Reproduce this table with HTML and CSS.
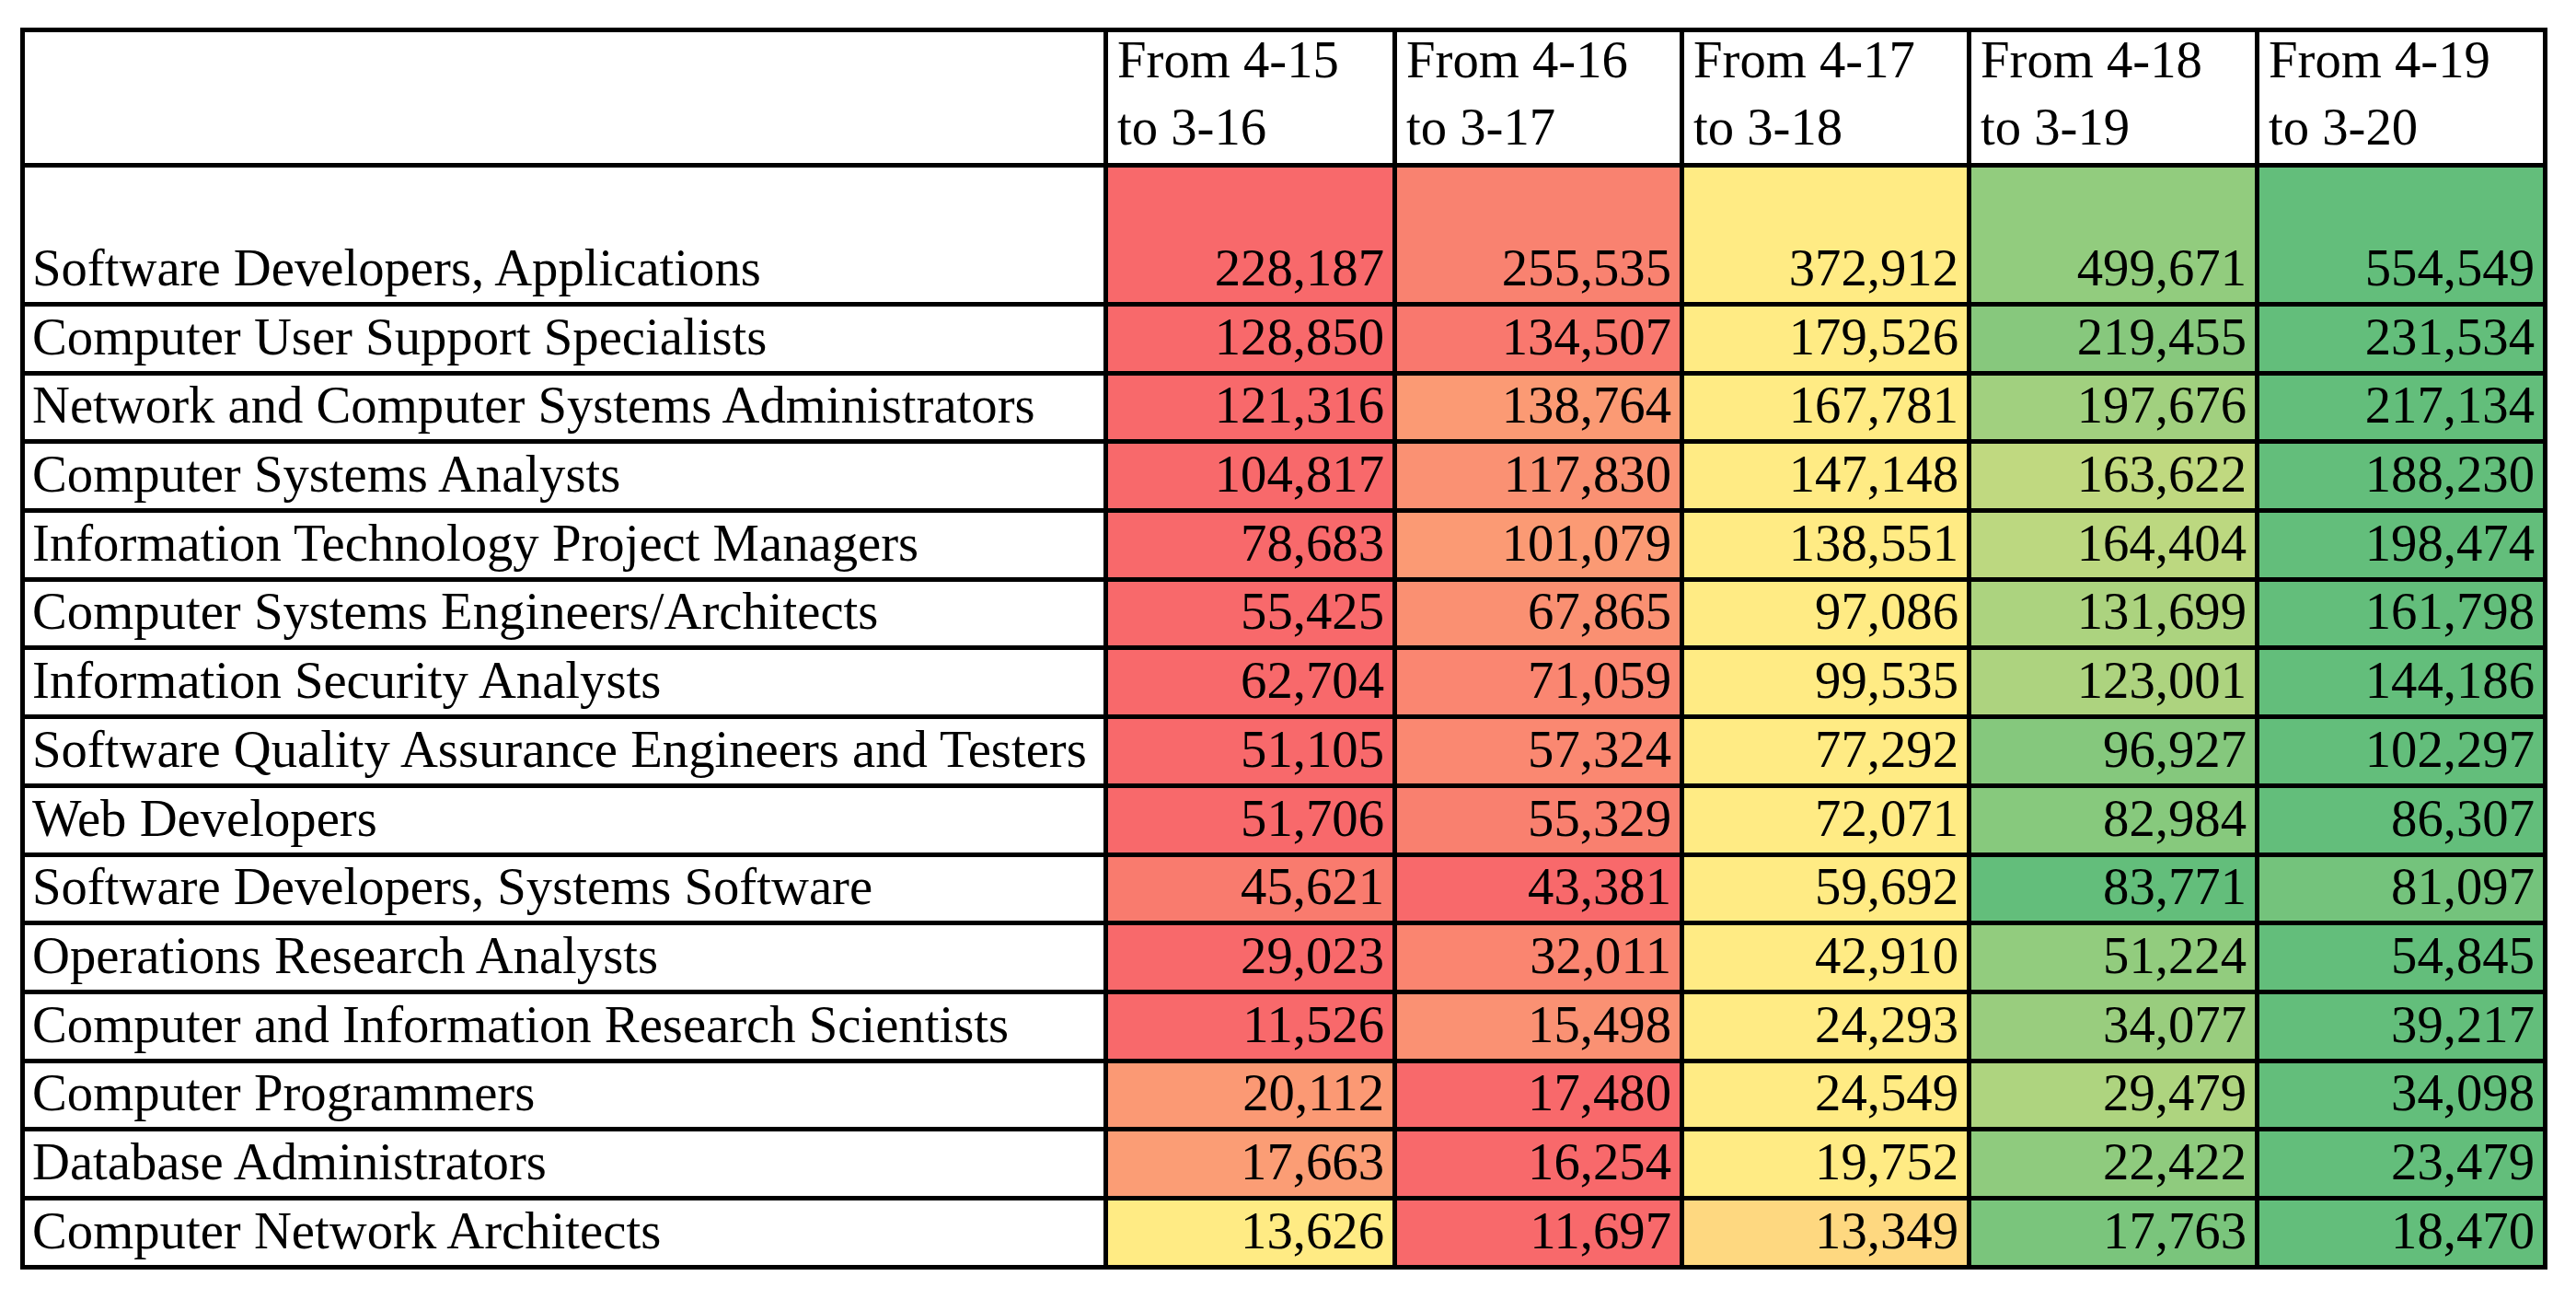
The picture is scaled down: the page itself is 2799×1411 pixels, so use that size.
FILE: index.html
```html
<!DOCTYPE html>
<html lang="en">
<head>
<meta charset="utf-8">
<title>IT occupations</title>
<link rel="stylesheet" href="styles.css">
</head>
<body>
<div class="sheet" role="table">
  <div class="row head-row" role="row">
    <div class="cell head corner" role="columnheader"></div>
    <div class="cell head" role="columnheader"><span>From 4-15<br>to 3-16</span></div>
    <div class="cell head" role="columnheader"><span>From 4-16<br>to 3-17</span></div>
    <div class="cell head" role="columnheader"><span>From 4-17<br>to 3-18</span></div>
    <div class="cell head" role="columnheader"><span>From 4-18<br>to 3-19</span></div>
    <div class="cell head" role="columnheader"><span>From 4-19<br>to 3-20</span></div>
  </div>
  <div class="row data-row" role="row">
    <div class="cell label" role="rowheader">Software Developers, Applications</div>
    <div class="cell num">228,187</div><div class="cell num">255,535</div><div class="cell num">372,912</div><div class="cell num">499,671</div><div class="cell num">554,549</div>
  </div>
  <div class="row data-row" role="row">
    <div class="cell label" role="rowheader">Computer User Support Specialists</div>
    <div class="cell num">128,850</div><div class="cell num">134,507</div><div class="cell num">179,526</div><div class="cell num">219,455</div><div class="cell num">231,534</div>
  </div>
  <div class="row data-row" role="row">
    <div class="cell label" role="rowheader">Network and Computer Systems Administrators</div>
    <div class="cell num">121,316</div><div class="cell num">138,764</div><div class="cell num">167,781</div><div class="cell num">197,676</div><div class="cell num">217,134</div>
  </div>
  <div class="row data-row" role="row">
    <div class="cell label" role="rowheader">Computer Systems Analysts</div>
    <div class="cell num">104,817</div><div class="cell num">117,830</div><div class="cell num">147,148</div><div class="cell num">163,622</div><div class="cell num">188,230</div>
  </div>
  <div class="row data-row" role="row">
    <div class="cell label" role="rowheader">Information Technology Project Managers</div>
    <div class="cell num">78,683</div><div class="cell num">101,079</div><div class="cell num">138,551</div><div class="cell num">164,404</div><div class="cell num">198,474</div>
  </div>
  <div class="row data-row" role="row">
    <div class="cell label" role="rowheader">Computer Systems Engineers/Architects</div>
    <div class="cell num">55,425</div><div class="cell num">67,865</div><div class="cell num">97,086</div><div class="cell num">131,699</div><div class="cell num">161,798</div>
  </div>
  <div class="row data-row" role="row">
    <div class="cell label" role="rowheader">Information Security Analysts</div>
    <div class="cell num">62,704</div><div class="cell num">71,059</div><div class="cell num">99,535</div><div class="cell num">123,001</div><div class="cell num">144,186</div>
  </div>
  <div class="row data-row" role="row">
    <div class="cell label" role="rowheader">Software Quality Assurance Engineers and Testers</div>
    <div class="cell num">51,105</div><div class="cell num">57,324</div><div class="cell num">77,292</div><div class="cell num">96,927</div><div class="cell num">102,297</div>
  </div>
  <div class="row data-row" role="row">
    <div class="cell label" role="rowheader">Web Developers</div>
    <div class="cell num">51,706</div><div class="cell num">55,329</div><div class="cell num">72,071</div><div class="cell num">82,984</div><div class="cell num">86,307</div>
  </div>
  <div class="row data-row" role="row">
    <div class="cell label" role="rowheader">Software Developers, Systems Software</div>
    <div class="cell num">45,621</div><div class="cell num">43,381</div><div class="cell num">59,692</div><div class="cell num">83,771</div><div class="cell num">81,097</div>
  </div>
  <div class="row data-row" role="row">
    <div class="cell label" role="rowheader">Operations Research Analysts</div>
    <div class="cell num">29,023</div><div class="cell num">32,011</div><div class="cell num">42,910</div><div class="cell num">51,224</div><div class="cell num">54,845</div>
  </div>
  <div class="row data-row" role="row">
    <div class="cell label" role="rowheader">Computer and Information Research Scientists</div>
    <div class="cell num">11,526</div><div class="cell num">15,498</div><div class="cell num">24,293</div><div class="cell num">34,077</div><div class="cell num">39,217</div>
  </div>
  <div class="row data-row" role="row">
    <div class="cell label" role="rowheader">Computer Programmers</div>
    <div class="cell num">20,112</div><div class="cell num">17,480</div><div class="cell num">24,549</div><div class="cell num">29,479</div><div class="cell num">34,098</div>
  </div>
  <div class="row data-row" role="row">
    <div class="cell label" role="rowheader">Database Administrators</div>
    <div class="cell num">17,663</div><div class="cell num">16,254</div><div class="cell num">19,752</div><div class="cell num">22,422</div><div class="cell num">23,479</div>
  </div>
  <div class="row data-row" role="row">
    <div class="cell label" role="rowheader">Computer Network Architects</div>
    <div class="cell num">13,626</div><div class="cell num">11,697</div><div class="cell num">13,349</div><div class="cell num">17,763</div><div class="cell num">18,470</div>
  </div>
</div>
<script src="script.js"></script>
</body>
</html>
```

FILE: styles.css
```css
html, body {
  margin: 0;
  padding: 0;
  background: #ffffff;
}

body {
  padding: 30px 0 0 22px;
  font-family: "Liberation Serif", "Times New Roman", serif;
  font-size: 56.7px;
  color: #000000;
}

.sheet {
  display: inline-grid;
  grid-template-columns: 1172px 309px 307px 307px 308px 308px;
  grid-template-rows: 142px 146px repeat(14, 69.7px);
  gap: 5px;
  padding: 5px;
  background: #000000;
}

.row {
  display: contents;
}

.cell {
  display: flex;
  align-items: flex-end;
  background: #ffffff;
  white-space: nowrap;
  line-height: 62px;
  padding-bottom: 6px;
  min-width: 0;
}

.head {
  line-height: 73px;
  padding: 0 0 3px 10px;
}

.label {
  padding-left: 8px;
}

.num {
  justify-content: flex-end;
  padding-right: 9px;
}
```

FILE: script.js
```js
(function () {
  var RED = [248, 105, 107];
  var YEL = [255, 235, 132];
  var GRN = [99, 190, 123];

  function mix(a, b, t) {
    return a.map(function (v, i) { return Math.round(v + (b[i] - v) * t); });
  }

  var rows = document.querySelectorAll('.data-row');
  rows.forEach(function (row) {
    var cells = Array.prototype.slice.call(row.querySelectorAll('.num'));
    var vals = cells.map(function (c) { return Number(c.textContent.replace(/,/g, '')); });
    var sorted = vals.slice().sort(function (a, b) { return a - b; });
    var min = sorted[0];
    var mid = sorted[Math.floor(sorted.length / 2)];
    var max = sorted[sorted.length - 1];
    cells.forEach(function (cell, i) {
      var v = vals[i];
      var c;
      if (v <= mid) {
        c = mid === min ? YEL : mix(RED, YEL, (v - min) / (mid - min));
      } else {
        c = max === mid ? YEL : mix(YEL, GRN, (v - mid) / (max - mid));
      }
      cell.style.backgroundColor = 'rgb(' + c.join(',') + ')';
    });
  });
})();
```
